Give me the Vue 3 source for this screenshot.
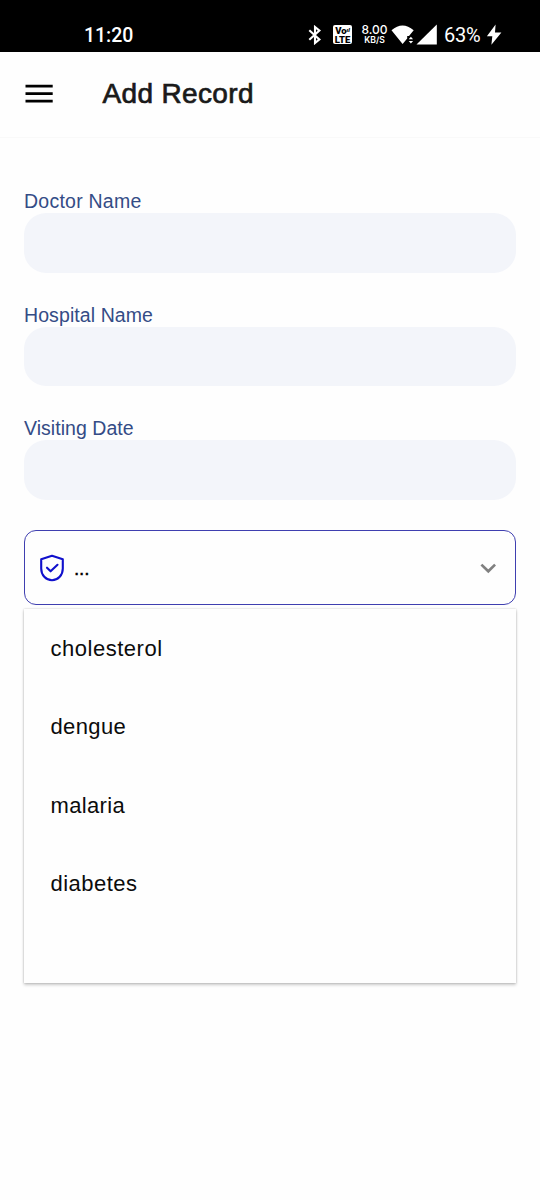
<script setup>
const fields = [
  { id: 'doctor', label: 'Doctor Name', spacing: 'sp-doctor' },
  { id: 'hospital', label: 'Hospital Name', spacing: 'sp-hospital' },
  { id: 'date', label: 'Visiting Date', spacing: 'sp-date' },
]
const options = ['cholesterol', 'dengue', 'malaria', 'diabetes']
</script>

<template>
  <div class="screen">
    <div class="status">
      <span class="time">11:20</span>
      <div class="indicators">
        <svg class="bluetooth" width="14" height="20" viewBox="0 0 14 20" fill="none" stroke="#fff" stroke-width="2.1">
          <path d="M1.3 5.3 11.4 14.4 7 18V2L11.4 5.6 1.3 14.7" />
        </svg>
        <div class="volte"><span class="vo">Vo<i>ıl</i></span><span>LTE</span></div>
        <div class="speed"><span class="rate">8.00</span><span class="unit">KB/S</span></div>
        <svg class="signals" width="48" height="22" viewBox="0 0 48 22" fill="#fff">
          <path d="M.5 6.2Q11.5-3.4 22.7 6.2L18 12H16.2V14.5L11.6 20Z" />
          <path d="M17.7 15.2 19.9 12.7 22.1 15.2ZM17.7 17 19.9 19.5 22.1 17Z" />
          <path d="M25.5 20.5 45.8.4V20.5Z" />
        </svg>
        <span class="percent">63%</span>
        <svg class="bolt" width="16" height="22" viewBox="0 0 16 22" fill="#fff">
          <path d="M9.6.6.9 12.2H6.3L5.4 20.8 15.4 8.4H9Z" />
        </svg>
      </div>
    </div>

    <header class="appbar">
      <svg class="menu" width="28" height="20" viewBox="0 0 28 20" stroke="#000" stroke-width="2.7">
        <path d="M.5 2.2H27.7M.5 9.7H27.7M.5 17.1H27.7" />
      </svg>
      <h1>Add Record</h1>
    </header>

    <main>
      <div v-for="f in fields" :key="f.id" class="field">
        <label :for="f.id"><span :class="f.spacing">{{ f.label }}</span></label>
        <input :id="f.id" type="text" />
      </div>

      <div class="select">
        <svg class="shield" width="26" height="28" viewBox="0 0 26 28" fill="none" stroke="#1010cc" stroke-width="2.1" stroke-linecap="round" stroke-linejoin="round">
          <path d="M13 1.8 23.8 5.2V14.5C23.8 21 19.2 26.2 13 26.2S2.2 21 2.2 14.5V5.2Z" />
          <path d="M8 13.7 11.6 17.3 18.5 10.8" />
        </svg>
        <span class="value">...</span>
        <svg class="chevron" width="16" height="11" viewBox="0 0 16 11" fill="none" stroke="#808080" stroke-width="2.7">
          <path d="M1.4 1.6 8.3 8.3 15.1 1.6" />
        </svg>
      </div>

      <ul class="options">
        <li v-for="o in options" :key="o"><span :class="o">{{ o }}</span></li>
      </ul>
    </main>
  </div>
</template>

<style>
body { margin: 0; background: #fefefe; }
</style>

<style scoped>
.screen {
  box-sizing: border-box;
  width: 540px;
  height: 1200px;
  overflow: hidden;
  background: #fefefe;
  font-family: "Liberation Sans", sans-serif;
}
.status {
  box-sizing: border-box;
  height: 51.5px;
  padding: 19px 38px 0 84px;
  display: flex;
  justify-content: space-between;
  background: #000;
  color: #fff;
  font-family: Roboto, sans-serif;
}
.time { font-size: 19.5px; line-height: 34px; font-weight: 500; letter-spacing: -0.05px; }
.indicators { display: flex; align-items: flex-start; }
.bluetooth { margin: 6px 11px 0 0; }
.volte {
  width: 19px;
  height: 19px;
  margin: 6px 9px 0 0;
  border-radius: 2px;
  background: #fff;
  color: #000;
  display: flex;
  flex-direction: column;
  align-items: center;
  font: 900 9.5px/9px Roboto, sans-serif;
}
.volte span { height: 9px; }
.volte .vo { padding-top: 0.5px; }
.volte i { font-size: 6px; vertical-align: 2px; line-height: 1px; }
.speed { width: 27px; display: flex; flex-direction: column; align-items: center; margin: 5px 2.5px 0 0; }
.rate { font: 500 12px/12px Inter, sans-serif; letter-spacing: 0; }
.unit { font: 600 8.6px/9px Inter, sans-serif; }
.signals { margin-top: 5px; }
.percent { width: 37px; margin-left: 5.5px; font-size: 20px; line-height: 33px; letter-spacing: -0.2px; }
.bolt { margin: 5px 0.5px 0 4.5px; }
.appbar {
  box-sizing: border-box;
  height: 86px;
  padding-left: 25px;
  border-bottom: 1px solid #f9f9f9;
  display: flex;
  align-items: center;
  background: #fefefe;
}
.menu { margin-right: 49.5px; }
h1 {
  margin: 0;
  color: #1a1a1a;
  font-size: 28px;
  line-height: 34px;
  font-weight: 400;
  letter-spacing: 0.35px;
  -webkit-text-stroke: 0.7px #1a1a1a;
}
main { padding: 51.5px 24px 0; }
.field { height: 113.5px; }
label {
  display: block;
  height: 24px;
  line-height: 25px;
  font-size: 19.5px;
  color: #344c86;
}
.sp-doctor { letter-spacing: 0.24px; }
.sp-hospital { letter-spacing: 0.09px; }
.sp-date { letter-spacing: 0.04px; }
input {
  box-sizing: border-box;
  display: block;
  width: 100%;
  height: 59.5px;
  border: 0;
  border-radius: 22px;
  background: #f3f5fa;
}
.select {
  box-sizing: border-box;
  height: 75px;
  margin-top: 0.5px;
  padding: 0 19px 0 14px;
  border: 1px solid #3f3fb0;
  border-radius: 12px;
  display: flex;
  align-items: center;
}
.value { flex: 1; margin-left: 9px; padding-top: 3px; font-size: 19px; line-height: 24px; letter-spacing: -0.2px; color: #000; -webkit-text-stroke: 0.4px #000; }
.chevron { margin-top: 2px; }
.options {
  box-sizing: border-box;
  height: 374px;
  margin: 4px 0 0;
  padding: 0.6px 0 0 26.5px;
  list-style: none;
  background: #fefefe;
  box-shadow: 0 0 2px rgba(0, 0, 0, 0.2), 0 2px 3px rgba(0, 0, 0, 0.2);
}
li { height: 78.5px; line-height: 78px; font-size: 22px; color: #0c0c0c; }
.cholesterol { letter-spacing: 0.52px; }
.dengue { letter-spacing: 0.38px; }
.malaria { letter-spacing: 0.33px; }
.diabetes { letter-spacing: 0.46px; }
</style>
